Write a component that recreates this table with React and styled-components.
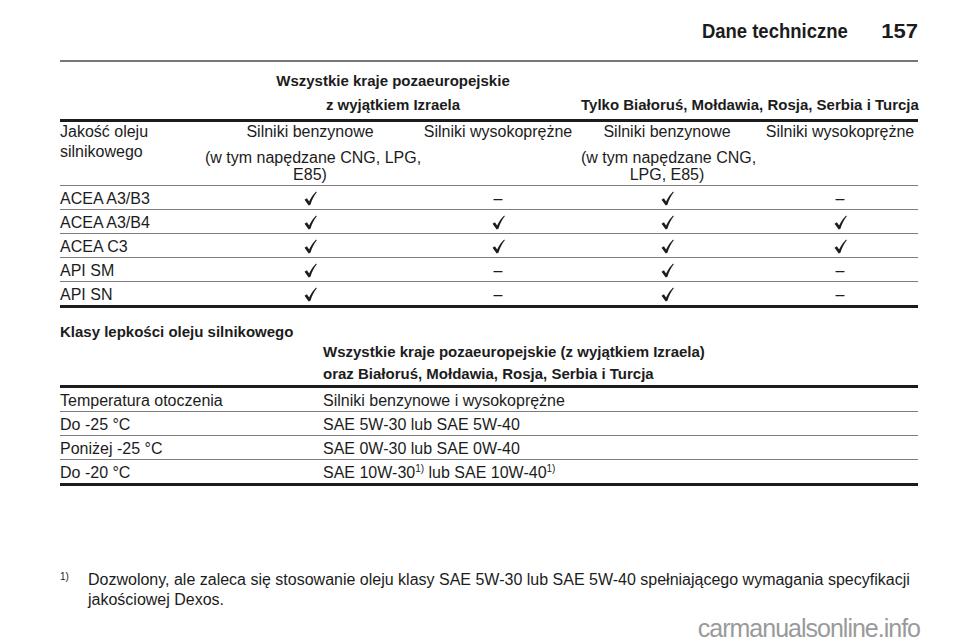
import React from 'react';
import styled, { createGlobalStyle } from 'styled-components';

const Global = createGlobalStyle`
  html, body { margin: 0; padding: 0; background: #fff; }
  body { font-family: "Liberation Sans", Arial, sans-serif; color: #1c1c1c; }
`;

const Page = styled.div`
  position: relative;
  width: 960px;
  height: 642px;
  overflow: hidden;
  box-sizing: border-box;
  padding: 0 42px 0 60px;
`;

const Header = styled.header`
  display: flex;
  justify-content: flex-end;
  align-items: baseline;
  gap: 35px;
  padding: 20px 0 18px;
  border-bottom: 2px solid #777;
  font-weight: 700;
  font-size: 21px;
  line-height: 22px;
`;

const HeadText = styled.span`
  display: inline-block;
  transform: scaleX(${(p) => p.$sx || 1});
  transform-origin: right center;
`;

const T1COLS = '145px 210px 166px 172px 165px';
const T2COLS = '263px 595px';

const GroupHead = styled.div`
  display: grid;
  grid-template-columns: ${(p) => p.$cols};
  align-items: end;
  margin-top: ${(p) => p.$mt || 0}px;
  padding-bottom: ${(p) => p.$pb || 0}px;
  border-bottom: 3px solid #1c1c1c;
  font-weight: 700;
  font-size: 15px;
  line-height: ${(p) => p.$lh || 24}px;
`;

const GroupCell = styled.div`
  grid-column: ${(p) => p.$col};
  text-align: ${(p) => p.$align || 'center'};
  white-space: nowrap;
`;

const Row = styled.div`
  display: grid;
  grid-template-columns: ${(p) => p.$cols};
  border-bottom: ${(p) => (p.$thick ? '3px solid #1c1c1c' : '1px solid #7d7d7d')};
  font-size: 16px;
  line-height: ${(p) => p.$lh || 21}px;
  padding: ${(p) => p.$pad || '2px 0 0'};
`;

const Cell = styled.div`
  text-align: ${(p) => (p.$center ? 'center' : 'left')};
  padding-left: ${(p) => p.$shift || 0}px;
  white-space: nowrap;
`;

const SubNote = styled.div`
  margin-top: 7px;
  line-height: 17px;
`;

const SectionTitle = styled.h3`
  margin: 13px 0 0;
  font-size: 15px;
  font-weight: 700;
  line-height: 22px;
`;

const Sup = styled.sup`
  font-size: 10px;
  line-height: 0;
  vertical-align: 6px;
`;

const Footnote = styled.div`
  display: flex;
  margin-top: 84px;
  font-size: 16px;
  line-height: 20px;
`;

const FootMark = styled.div`
  flex: 0 0 28px;
  font-size: 10px;
  line-height: 14px;
`;

const Watermark = styled.div`
  position: absolute;
  right: 40px;
  bottom: 0;
  font-size: 25px;
  line-height: 28px;
  letter-spacing: -1px;
  color: #9a9a9a;
`;

const CheckSvg = styled.svg`
  display: inline-block;
  vertical-align: middle;
  margin-top: -3px;
`;

const Check = () => (
  <CheckSvg width="13" height="15" viewBox="0 0 14 16" aria-label="✓">
    <path
      d="M0.6 9.4 L3.1 7.7 L5.5 11.3 C7.5 7 10 3.6 13.1 0.5 L13.8 1.2 C11 4.6 8.7 9 6.9 14.7 L5.1 15.5 Z"
      fill="#1c1c1c"
    />
  </CheckSvg>
);

const Dash = () => <span>–</span>;

const Mark = ({ v }) => (v ? <Check /> : <Dash />);

const qualityRows = [
  ['ACEA A3/B3', [1, 0, 1, 0]],
  ['ACEA A3/B4', [1, 1, 1, 1]],
  ['ACEA C3', [1, 1, 1, 1]],
  ['API SM', [1, 0, 1, 0]],
  ['API SN', [1, 0, 1, 0]],
];

const viscRows = [
  ['Do -25 °C', 'SAE 5W-30 lub SAE 5W-40'],
  ['Poniżej -25 °C', 'SAE 0W-30 lub SAE 0W-40'],
];

export default function App() {
  return (
    <>
      <Global />
      <Page>
        <Header>
          <HeadText $sx={0.88}>Dane techniczne</HeadText>
          <HeadText $sx={1.05}>157</HeadText>
        </Header>

        <GroupHead $cols="145px 376px 337px" $mt={7} $pb={2}>
          <GroupCell $col={2}>
            Wszystkie kraje pozaeuropejskie
            <br />z wyjątkiem Izraela
          </GroupCell>
          <GroupCell $col={3} $align="right">
            Tylko Białoruś, Mołdawia, Rosja, Serbia i Turcja
          </GroupCell>
        </GroupHead>

        <Row $cols={T1COLS} $lh={20} $pad="0 0 2px">
          <Cell>
            Jakość oleju
            <br />
            silnikowego
          </Cell>
          <Cell $center>
            Silniki benzynowe
            <SubNote>
              (w tym napędzane CNG, LPG,
              <br />
              E85)
            </SubNote>
          </Cell>
          <Cell $center>Silniki wysokoprężne</Cell>
          <Cell $center>
            Silniki benzynowe
            <SubNote>
              (w tym napędzane CNG,
              <br />
              LPG, E85)
            </SubNote>
          </Cell>
          <Cell $center $shift={9}>
            Silniki wysokoprężne
          </Cell>
        </Row>

        {qualityRows.map(([name, marks], i) => (
          <Row key={name} $cols={T1COLS} $thick={i === qualityRows.length - 1}>
            <Cell>{name}</Cell>
            {marks.map((m, j) => (
              <Cell key={j} $center $shift={j === 3 ? 9 : 0}>
                <Mark v={m} />
              </Cell>
            ))}
          </Row>
        ))}

        <SectionTitle>Klasy lepkości oleju silnikowego</SectionTitle>

        <GroupHead $cols={T2COLS} $lh={22} $mt={-2}>
          <GroupCell $col={2} $align="left">
            Wszystkie kraje pozaeuropejskie (z wyjątkiem Izraela)
            <br />
            oraz Białoruś, Mołdawia, Rosja, Serbia i Turcja
          </GroupCell>
        </GroupHead>

        <Row $cols={T2COLS}>
          <Cell>Temperatura otoczenia</Cell>
          <Cell>Silniki benzynowe i wysokoprężne</Cell>
        </Row>
        {viscRows.map(([t, v]) => (
          <Row key={t} $cols={T2COLS}>
            <Cell>{t}</Cell>
            <Cell>{v}</Cell>
          </Row>
        ))}
        <Row $cols={T2COLS} $thick>
          <Cell>Do -20 °C</Cell>
          <Cell>
            SAE 10W-30<Sup>1)</Sup> lub SAE 10W-40<Sup>1)</Sup>
          </Cell>
        </Row>

        <Footnote>
          <FootMark>1)</FootMark>
          <div>
            Dozwolony, ale zaleca się stosowanie oleju klasy SAE 5W-30 lub SAE 5W-40 spełniającego wymagania specyfikacji
            jakościowej Dexos.
          </div>
        </Footnote>

        <Watermark>carmanualsonline.info</Watermark>
      </Page>
    </>
  );
}
